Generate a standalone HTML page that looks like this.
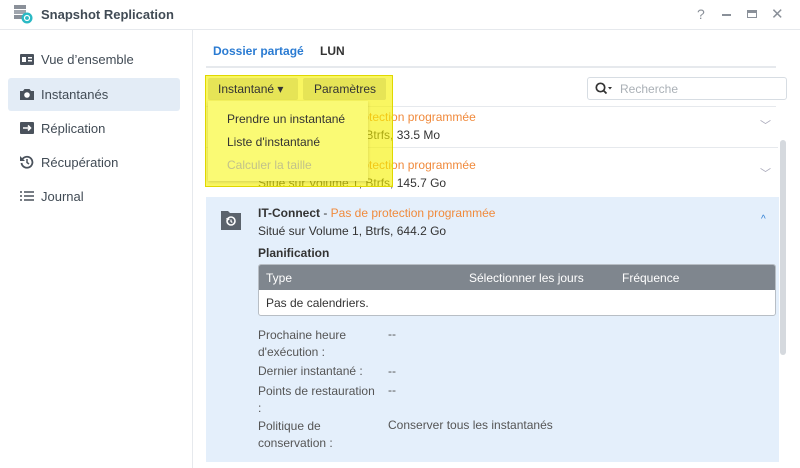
<!DOCTYPE html>
<html><head><meta charset="utf-8"><style>
*{margin:0;padding:0;box-sizing:border-box}
body{width:800px;height:468px;overflow:hidden;background:#fff;font-family:"Liberation Sans","DejaVu Sans",sans-serif;font-size:12px;color:#333;position:relative}
.a{position:absolute}
.side{left:0;top:30px;width:193px;height:438px;border-right:1px solid #e6e9ed}
.it{position:absolute;left:8px;width:172px;height:33px;font-size:13px;color:#414b55;line-height:33px;padding-left:33px;border-radius:3px}
.it svg{position:absolute;left:12px;top:9px}
.or{color:#f08a3c}
.lb{color:#555}
</style></head><body>
<div class="a" style="left:0;top:0;width:800px;height:30px;border-bottom:1px solid #e6e9ed"></div>
<svg class="a" style="left:13px;top:4px" width="20" height="20" viewBox="0 0 20 20"><rect x="1" y="1" width="12" height="4" fill="#8a9099"/><rect x="1" y="6" width="12" height="4" fill="#a0a6ae"/><rect x="1" y="11" width="12" height="4" fill="#8a9099"/><circle cx="14" cy="14" r="5.5" fill="#2ab9c4"/><circle cx="14" cy="14" r="2.5" fill="none" stroke="#fff" stroke-width="1.2"/></svg>
<div class="a" style="left:41px;top:7px;font-size:13px;font-weight:bold;color:#414b55">Snapshot Replication</div>
<div class="a" style="left:697px;top:6px;font-size:14px;color:#8a9099">?</div>
<div class="a" style="left:722px;top:14px;width:9px;height:2px;background:#8a9099"></div>
<div class="a" style="left:747px;top:10px;width:10px;height:8px;border:1.5px solid #8a9099;border-top-width:3px"></div>
<div class="a" style="left:771px;top:5px;font-size:15px;color:#8a9099">✕</div>
<div class="a side"></div>
<div class="it" style="top:43px">Vue d’ensemble<svg width="14" height="14" viewBox="0 0 14 14"><rect x="0" y="2" width="14" height="11" rx="1" fill="#4a525c"/><rect x="2" y="5" width="4" height="5" fill="#fff"/><rect x="8" y="5" width="4" height="1.5" fill="#fff"/><rect x="8" y="8" width="4" height="1.5" fill="#fff"/></svg></div>
<div class="it" style="top:78px;background:#e3ecf6">Instantanés<svg width="14" height="14" viewBox="0 0 14 14"><path d="M0 4h3l1.5-2h5L11 4h3v9H0z" fill="#4a525c"/><circle cx="7" cy="8" r="2.8" fill="#fff"/></svg></div>
<div class="it" style="top:112px">Réplication<svg width="14" height="14" viewBox="0 0 14 14"><rect x="0" y="1" width="14" height="12" rx="1" fill="#4a525c"/><path d="M3 7h7M8 4.5L10.5 7 8 9.5" stroke="#fff" stroke-width="1.6" fill="none"/></svg></div>
<div class="it" style="top:146px">Récupération<svg width="14" height="14" viewBox="0 0 14 14"><path d="M2.5 4A5.5 5.5 0 1 1 1.5 8" stroke="#4a525c" stroke-width="1.8" fill="none"/><path d="M0 1v5h5z" fill="#4a525c"/><path d="M7 4v3.5l2 1.5" stroke="#4a525c" stroke-width="1.5" fill="none"/></svg></div>
<div class="it" style="top:180px">Journal<svg width="14" height="14" viewBox="0 0 14 14"><path d="M0 3h2M4 3h10M0 7h2M4 7h10M0 11h2M4 11h10" stroke="#4a525c" stroke-width="1.6"/></svg></div>

<div class="a" style="left:213px;top:44px;font-weight:bold;color:#2a7bd2;font-size:12px">Dossier partagé</div>
<div class="a" style="left:320px;top:44px;font-weight:bold;color:#333;font-size:12px">LUN</div>
<div class="a" style="left:206px;top:66px;width:570px;height:2px;background:#e6e9ed"></div>

<div class="a" style="left:587px;top:77px;width:200px;height:23px;border:1px solid #d7dde3;border-radius:3px"></div>
<svg class="a" style="left:595px;top:82px" width="18" height="13" viewBox="0 0 18 13"><circle cx="5.5" cy="5.5" r="4.2" stroke="#333" stroke-width="1.7" fill="none"/><path d="M8.5 8.5l3 3" stroke="#333" stroke-width="1.8"/><path d="M13 5h4l-2 2.5z" fill="#333"/></svg>
<div class="a" style="left:620px;top:82px;color:#aab0b6;font-size:12px">Recherche</div>
<div class="a" style="left:206px;top:106px;width:570px;height:1px;background:#e6e9ed"></div>

<div class="a" style="left:206px;top:107px;width:572px;height:41px;border-bottom:1px solid #e6e9ed"></div>
<div class="a" style="left:258px;top:110px;white-space:nowrap"><b>docker</b> -</div>
<div class="a or" style="left:311px;top:110px;white-space:nowrap">Pas de protection programmée</div>
<div class="a" style="left:258px;top:128px">Situé sur Volume 1, Btrfs, 33.5 Mo</div>
<div class="a" style="left:760px;top:117px;color:#aab;font-size:11px">﹀</div>
<div class="a" style="left:258px;top:158px;white-space:nowrap"><b>homes</b> -</div>
<div class="a or" style="left:311px;top:158px;white-space:nowrap">Pas de protection programmée</div>
<div class="a" style="left:258px;top:176px">Situé sur Volume 1, Btrfs, 145.7 Go</div>
<div class="a" style="left:760px;top:165px;color:#aab;font-size:11px">﹀</div>

<div class="a" style="left:206px;top:197px;width:573px;height:265px;background:#e4effb"></div>
<svg class="a" style="left:221px;top:209px" width="20" height="21" viewBox="0 0 20 21"><path d="M0 2h7l2 2h11v17H0z" fill="#5b636c"/><circle cx="10" cy="12" r="4" stroke="#fff" stroke-width="1.6" fill="none"/><path d="M5 9l1.5 3 2.5-2z" fill="#fff"/><path d="M10 10.5v2l1.3 1" stroke="#fff" stroke-width="1.2" fill="none"/></svg>
<div class="a" style="left:258px;top:206px"><b>IT-Connect</b> - <span class="or">Pas de protection programmée</span></div>
<div class="a" style="left:258px;top:224px">Situé sur Volume 1, Btrfs, 644.2 Go</div>
<div class="a" style="left:761px;top:214px;color:#2a7bd2;font-size:10px">^</div>
<div class="a" style="left:258px;top:246px;font-weight:bold">Planification</div>
<div class="a" style="left:258px;top:264px;width:518px;height:52px;border:1px solid #b8bec5;border-radius:3px;background:#fff;overflow:hidden">
<div style="height:25px;background:#7f868e;color:#fff;position:relative"><span class="a" style="left:7px;top:6px">Type</span><span class="a" style="left:210px;top:6px">Sélectionner les jours</span><span class="a" style="left:363px;top:6px">Fréquence</span></div>
<div style="padding:6px 7px">Pas de calendriers.</div></div>
<div class="a lb" style="left:258px;top:327px;line-height:17px">Prochaine heure<br>d'exécution :</div>
<div class="a lb" style="left:388px;top:327px">--</div>
<div class="a lb" style="left:258px;top:364px">Dernier instantané :</div>
<div class="a lb" style="left:388px;top:364px">--</div>
<div class="a lb" style="left:258px;top:383px;line-height:17px">Points de restauration<br>:</div>
<div class="a lb" style="left:388px;top:383px">--</div>
<div class="a lb" style="left:258px;top:418px;line-height:17px">Politique de<br>conservation :</div>
<div class="a lb" style="left:388px;top:418px">Conserver tous les instantanés</div>
<div class="a" style="left:780px;top:140px;width:6px;height:215px;background:#d5d9de;border-radius:3px"></div>

<div class="a" style="left:205px;top:75px;width:188px;height:112px;background:rgba(245,240,0,0.62);border:1px solid #e0d800"></div>
<div class="a" style="left:208px;top:78px;width:90px;height:22px;background:#e6e456;border-radius:2px"></div>
<div class="a" style="left:218px;top:82px">Instantané ▾</div>
<div class="a" style="left:303px;top:78px;width:83px;height:22px;background:#e6e456;border-radius:2px"></div>
<div class="a" style="left:314px;top:82px">Paramètres</div>
<div class="a" style="left:208px;top:101px;width:160px;height:80px;background:#fafa74;box-shadow:0 1px 3px rgba(0,0,0,.15)"></div>
<div class="a" style="left:227px;top:112px">Prendre un instantané</div>
<div class="a" style="left:227px;top:135px">Liste d'instantané</div>
<div class="a" style="left:227px;top:158px;color:#c2c28a">Calculer la taille</div>
</body></html>
